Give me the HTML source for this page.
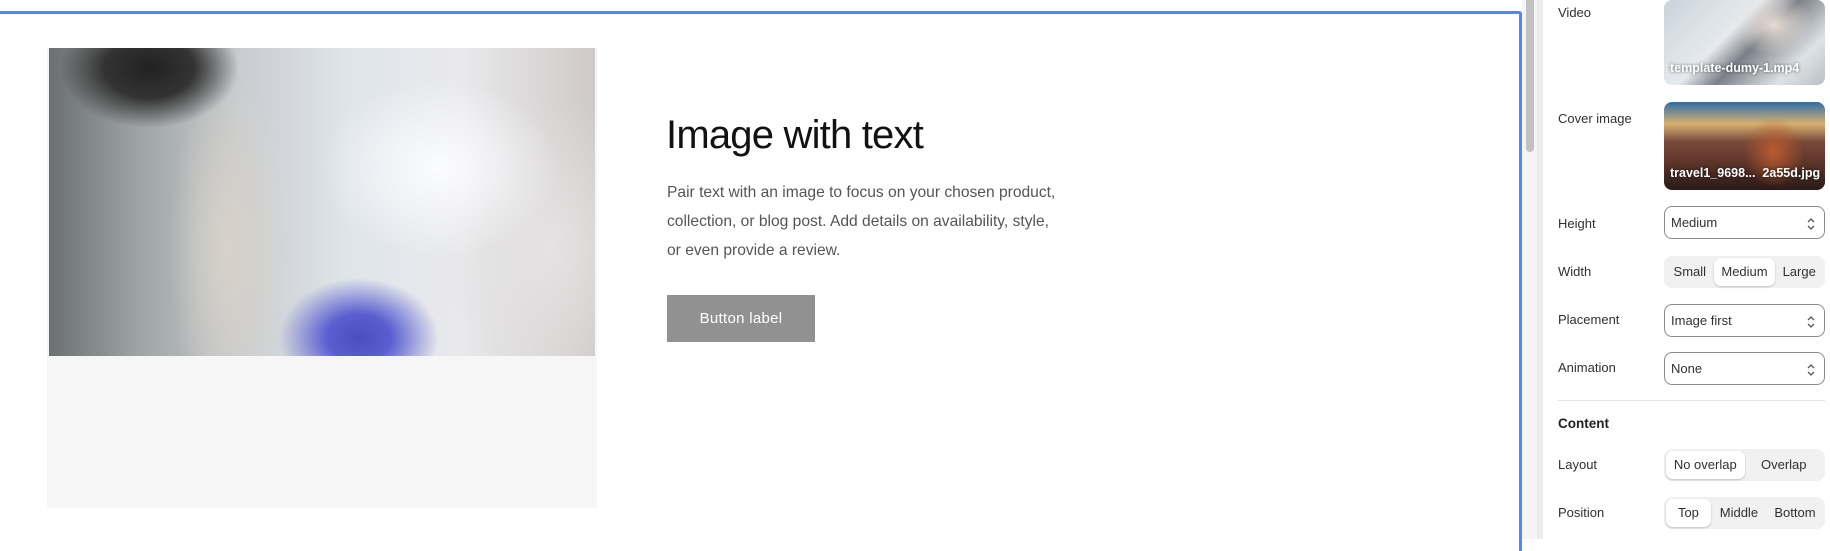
<!DOCTYPE html>
<html><head><meta charset="utf-8"><style>
*{box-sizing:border-box;margin:0;padding:0}
body{width:1830px;height:539px;overflow:hidden;background:#fff;position:relative;font-family:"Liberation Sans",sans-serif}
.frame{position:absolute;left:0;top:11px;width:1522px;height:540px;border-top:3px solid #4a8cf7;border-right:3px solid #4a8cf7;border-top-right-radius:3px}
.imgbox{position:absolute;left:47px;top:48px;width:550px;height:460px;background:#f6f6f6}
.photo{position:absolute;left:49px;top:48px;width:546px;height:308px;
background:radial-gradient(ellipse 120px 90px at 390px 120px,#fbfcff 0%,rgba(250,250,255,0) 100%),
radial-gradient(ellipse 80px 60px at 310px 290px,#4a4fc0 0%,#5a5fd0 40%,rgba(90,95,200,0) 100%),
radial-gradient(ellipse 110px 150px at 500px 200px,#e4e2e2 0%,rgba(228,226,226,0) 100%),
radial-gradient(ellipse 90px 60px at 100px 20px,#222 0%,#333 50%,rgba(50,50,50,0) 100%),
radial-gradient(ellipse 60px 180px at 180px 200px,#d8d2c8 0%,rgba(216,210,200,0) 100%),
linear-gradient(90deg,#6b6f70 0%,#9aa0a0 15%,#c9ccd0 35%,#dfe5ea 55%,#e9e9ec 75%,#cfcac8 100%)}
h1{position:absolute;left:666px;top:113px;font-size:40px;font-weight:400;color:#121212;letter-spacing:-0.8px}
p.t{position:absolute;left:667px;top:178px;width:392px;font-size:15.6px;line-height:29px;color:#555}
.btn{position:absolute;left:667px;top:295px;width:148px;height:47px;background:#919191;color:#fff;font-size:15px;display:flex;align-items:center;justify-content:center;letter-spacing:.3px}
.track{position:absolute;left:1522px;top:0;width:15px;height:539px;background:#f4f4f4}
.thumb{position:absolute;left:1526px;top:0;width:8px;height:152px;background:#c1c1c1;border-radius:0 0 4px 4px}
.sep{position:absolute;left:1537px;top:0;width:6px;height:539px;background:#ececec}
.panel{position:absolute;left:1543px;top:0;width:287px;height:539px;background:#fff;font-size:13px;color:#303030}
.lab{position:absolute;left:15px}
.ctl{position:absolute;left:121px;width:161px}
.sel{border:1px solid #8a8a8a;border-radius:8px;height:33px;padding-left:6px;display:flex;align-items:center}
.sel svg{position:absolute;right:8px;top:10px}
.seg{background:#f1f1f1;border-radius:8px;height:32px;display:flex;align-items:center;padding:2px}
.seg span{flex:1;text-align:center;height:28px;line-height:28px}
.seg span.on{background:#fff;border-radius:7px;box-shadow:0 1px 2px rgba(0,0,0,.2)}
.thumbimg{border-radius:8px;overflow:hidden;position:absolute}
.thumbimg b{position:absolute;left:6px;bottom:10px;color:#fff;font-size:12.5px;font-weight:700;white-space:nowrap;text-shadow:0 0 3px rgba(0,0,0,.6)}
</style></head><body>
<div class="frame"></div>
<div class="imgbox"></div>
<div class="photo"></div>
<h1>Image with text</h1>
<p class="t">Pair text with an image to focus on your chosen product, collection, or blog post. Add details on availability, style, or even provide a review.</p>
<div class="btn">Button label</div>
<div class="track"></div><div class="thumb"></div><div class="sep"></div>
<div class="panel">
<div class="lab" style="top:5px">Video</div>
<div class="thumbimg" style="left:121px;top:0;width:161px;height:85px;background:radial-gradient(ellipse 40px 30px at 110px 25px,#e8dcd4,rgba(0,0,0,0)),linear-gradient(135deg,#c9d3da 0%,#e6eaee 40%,#7b8088 55%,#dde2e6 80%,#b8c0c6 100%)"><b>template-dumy-1.mp4</b></div>
<div class="lab" style="top:111px">Cover image</div>
<div class="thumbimg" style="left:121px;top:102px;width:161px;height:88px;background:radial-gradient(ellipse 30px 35px at 110px 50px,#b85a2e,rgba(0,0,0,0)),linear-gradient(180deg,#2f6fa8 0%,#d8b070 25%,#7a4a3a 45%,#5b3428 70%,#2a1a18 100%)"><b>travel1_9698...&nbsp; 2a55d.jpg</b></div>
<div class="lab" style="top:216px">Height</div>
<div class="ctl sel" style="top:206px">Medium<svg width="10" height="14" viewBox="0 0 10 14"><path d="M2 5l3-3 3 3M2 9l3 3 3-3" fill="none" stroke="#555" stroke-width="1.3"/></svg></div>
<div class="lab" style="top:264px">Width</div>
<div class="ctl seg" style="top:256px"><span>Small</span><span class="on" style="flex:1.3">Medium</span><span>Large</span></div>
<div class="lab" style="top:312px">Placement</div>
<div class="ctl sel" style="top:304px">Image first<svg width="10" height="14" viewBox="0 0 10 14"><path d="M2 5l3-3 3 3M2 9l3 3 3-3" fill="none" stroke="#555" stroke-width="1.3"/></svg></div>
<div class="lab" style="top:360px">Animation</div>
<div class="ctl sel" style="top:352px">None<svg width="10" height="14" viewBox="0 0 10 14"><path d="M2 5l3-3 3 3M2 9l3 3 3-3" fill="none" stroke="#555" stroke-width="1.3"/></svg></div>
<div style="position:absolute;left:15px;top:400px;width:267px;height:1px;background:#e3e3e3"></div>
<div class="lab" style="top:416px;font-weight:700;font-size:13.5px;color:#222">Content</div>
<div class="lab" style="top:457px">Layout</div>
<div class="ctl seg" style="top:449px"><span class="on">No overlap</span><span>Overlap</span></div>
<div class="lab" style="top:505px">Position</div>
<div class="ctl seg" style="top:497px"><span class="on" style="flex:.8">Top</span><span>Middle</span><span>Bottom</span></div>
</div>
</body></html>
